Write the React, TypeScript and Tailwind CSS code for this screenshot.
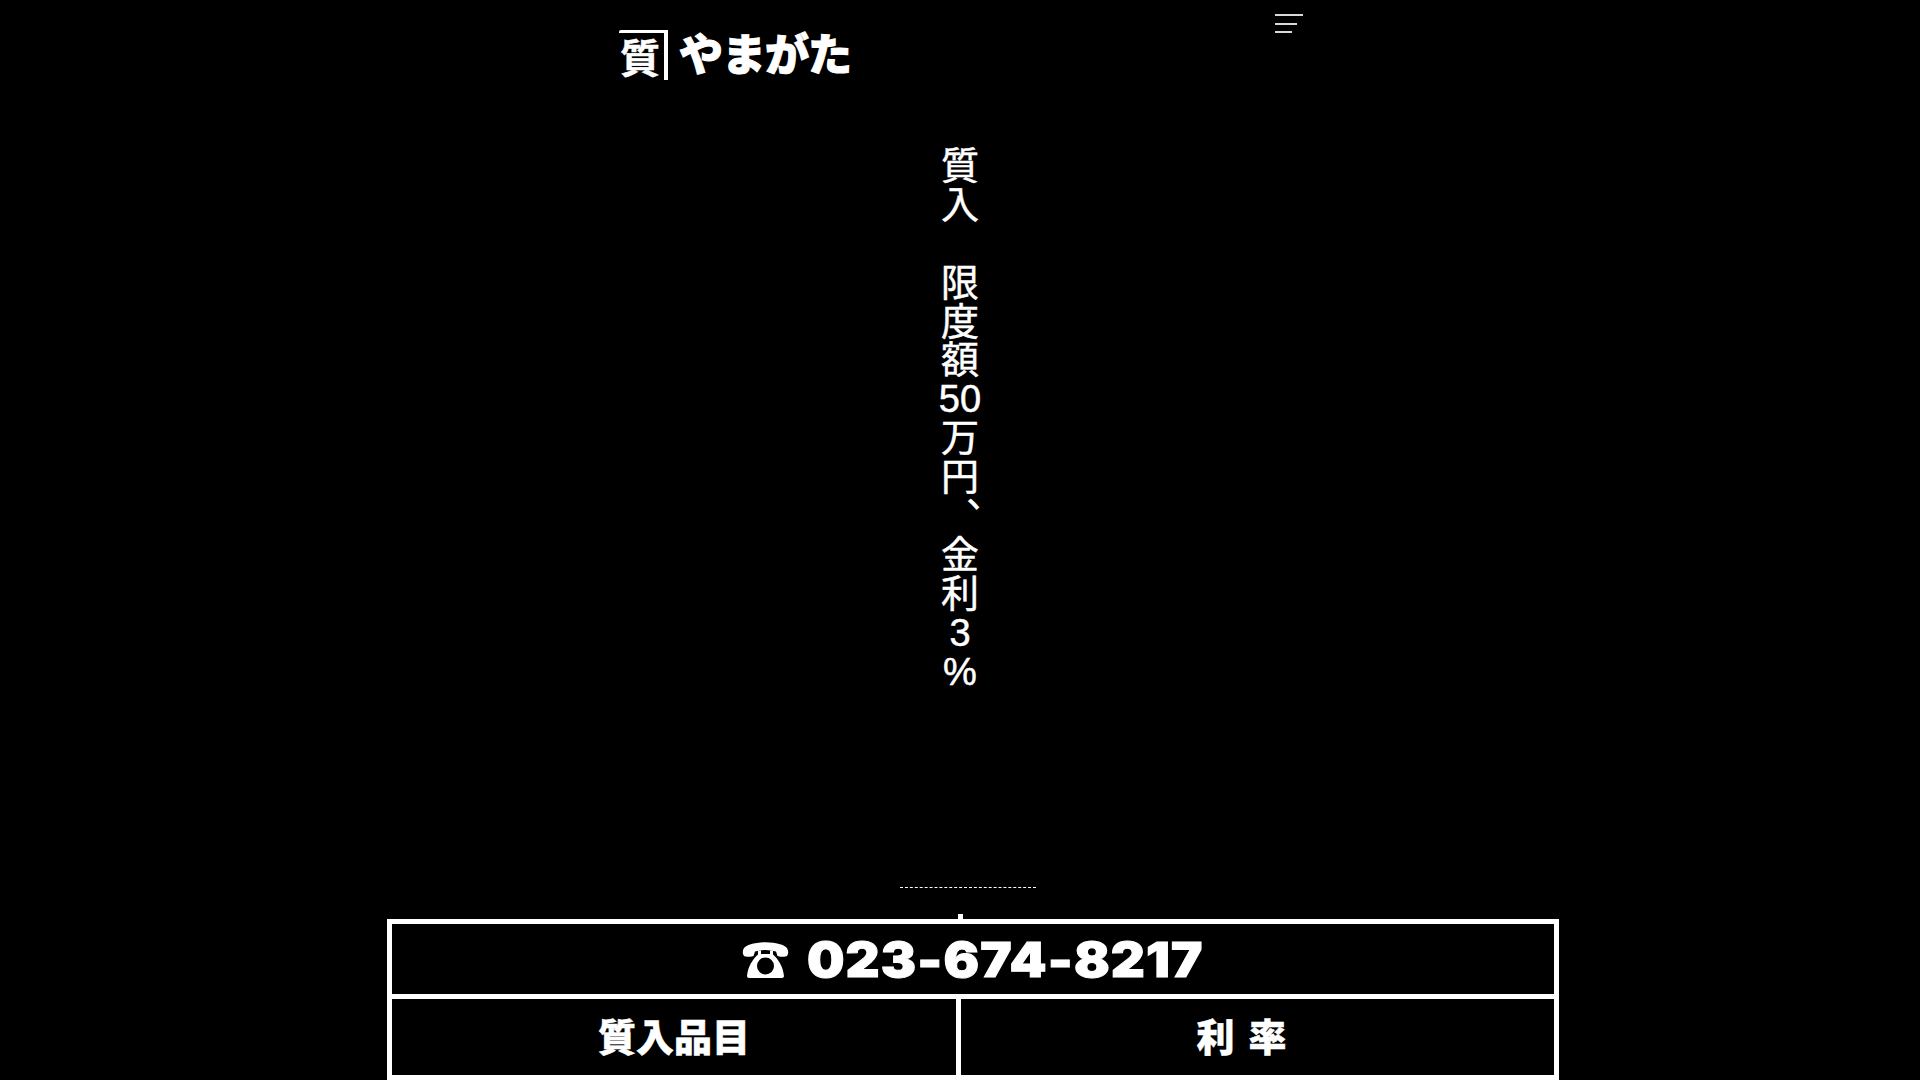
const JP = "font-['Liberation_Sans','Noto_Sans_CJK_JP',sans-serif]"

// 縦に並ぶ見出し(空文字は1行分の空き)
const lineas = ['質', '入', '', '限', '度', '額', '50', '万', '円', '、', '金', '利', '3', '%']

function Logo() {
  return (
    <a className="flex items-start gap-[11px]" href="#">
      <span className="relative w-[49px] h-[50px] border-t-[3px] border-r-[4px] border-white rounded-tl-[2px]">
        <span className="absolute left-[1px] top-[1px] w-[40px] text-center text-[40px] leading-[44px] font-bold text-white [-webkit-text-stroke:0.5px_white] font-['Noto_Sans_CJK_JP',sans-serif]">
          質
        </span>
      </span>
      <span className="-mt-[3px] text-[44px] leading-[50px] font-black text-white tracking-[-1px] [-webkit-text-stroke:1px_white] font-['Noto_Sans_CJK_JP',sans-serif]">
        やまがた
      </span>
    </a>
  )
}

function Menu() {
  return (
    <button className="flex flex-col gap-[6.5px] w-[28px]">
      <span className="block h-[2px] w-[28px] bg-white/85" />
      <span className="block h-[2px] w-[22px] bg-white/85" />
      <span className="block h-[2px] w-[17px] bg-white/85" />
    </button>
  )
}

function Telefono() {
  return (
    <svg className="w-[47px] h-[36px] mr-[36px] shrink-0" viewBox="0 0 47 36" fill="white">
      <path d="M1 12C0 7 3 4 8 2.500C18 -0.500 29 -0.500 39 2.500C44 4 47 7 46 12L45 14C44 15 37 15 35.500 14L34 9.500C27 7.500 20 7.500 13 9.500L11.500 14C10 15 3 15 2 14Z" />
      <path
        fillRule="evenodd"
        d="M16 8.500H19V12H28V8.500H31V12.500C36 17 41 24 42 34C42 35 41 36 40 36H7C6 36 5 35 5 34C6 24 11 17 16 12.500ZM23.500 15.500A8.500 8.500 0 1 0 23.500 32.500A8.500 8.500 0 1 0 23.500 15.500Z"
      />
    </svg>
  )
}

export default function App() {
  return (
    <div className={`h-screen overflow-hidden bg-black text-white flex flex-col ${JP}`}>
      <header className="h-[147px] ml-[619px] w-[684px] flex justify-between shrink-0">
        <div className="pt-[30px]"><Logo /></div>
        <div className="pt-[14px]"><Menu /></div>
      </header>

      <h2 className="h-[740px] shrink-0 flex flex-col items-center text-[38px] leading-[38.9px] font-normal text-white [-webkit-text-stroke:0.5px_white]">
        {lineas.map((l, i) =>
          l === '、' ? (
            <span key={i} className="h-[38.9px] w-[35px] block [writing-mode:vertical-rl]">{l}</span>
          ) : (
            <span key={i} className="h-[38.9px] block">{l}</span>
          )
        )}
      </h2>

      <div className="ml-[900px] w-[136px] border-t border-dashed border-white shrink-0" />

      <div className="ml-[958px] mt-[26px] w-[5px] h-[5px] bg-white shrink-0" />

      <div className="ml-[387px] w-[1172px] border-[5px] border-b-0 border-white shrink-0 font-['Noto_Sans_CJK_JP',sans-serif]">
        <div className="h-[68px] flex items-center justify-center pt-[2px] pr-[18px] border-b-[5px] border-white box-content">
          <Telefono />
          <span className="text-[48px] leading-none font-black tracking-[1px] font-['Inter',sans-serif] scale-x-[1.1] [-webkit-text-stroke:1px_white]">
            023-674-8217
          </span>
        </div>
        <div className="grid grid-cols-[569px_1fr] h-[76px] border-b-[5px] border-white box-content">
          <div className="flex items-center justify-center pb-[6px] border-r-[5px] border-white text-[38px] font-black [-webkit-text-stroke:0.5px_white]">質入品目</div>
          <div className="flex items-center justify-center pb-[6px] pr-[32px] gap-[14px] text-[38px] font-black [-webkit-text-stroke:0.5px_white]">
            <span>利</span>
            <span>率</span>
          </div>
        </div>
      </div>
    </div>
  )
}
